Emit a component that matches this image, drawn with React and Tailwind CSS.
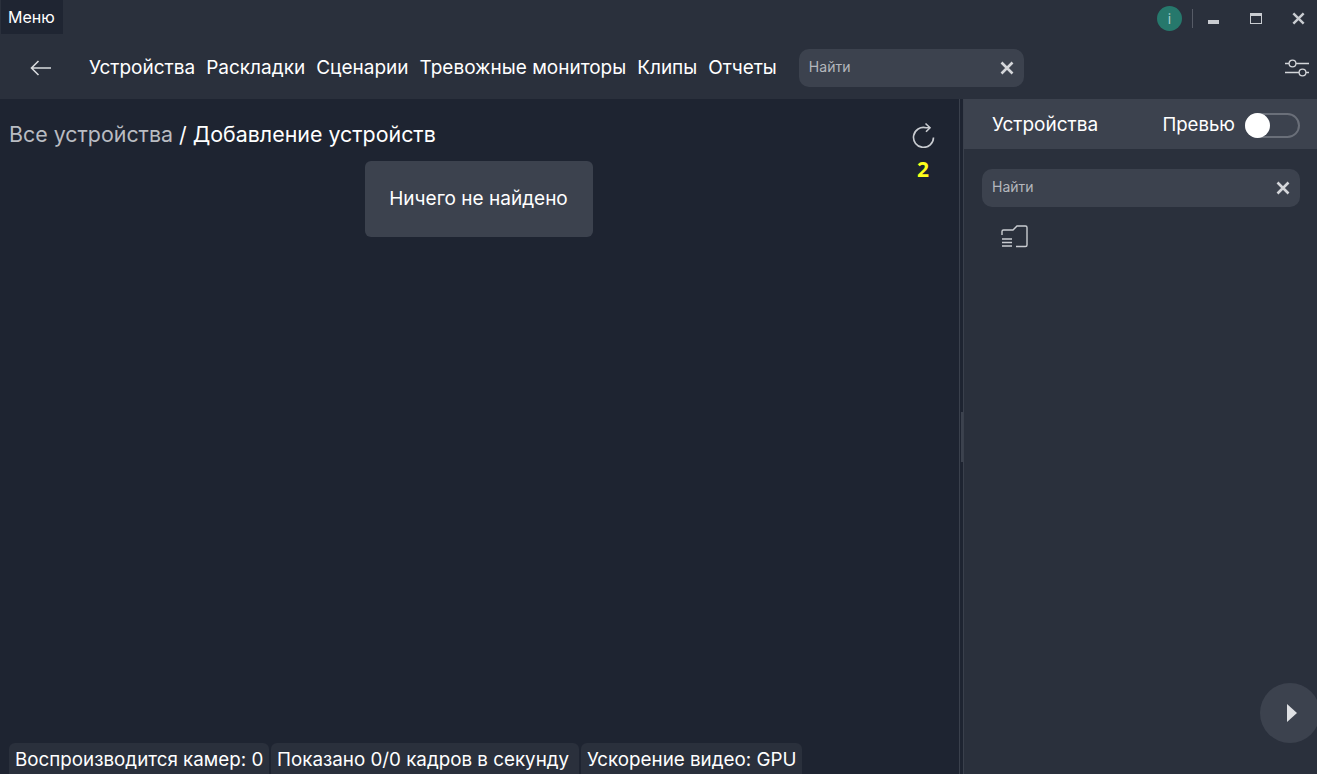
const navItems = ["Устройства", "Раскладки", "Сценарии", "Тревожные мониторы", "Клипы", "Отчеты"];
const statusItems = [
  { text: "Воспроизводится камер: 0", width: "w-[260px]" },
  { text: "Показано 0/0 кадров в секунду", width: "w-[308px]" },
  { text: "Ускорение видео: GPU", width: "w-[221px]" },
];

const CloseIcon = ({ size = 16 }) => (
  <svg width={size} height={size} viewBox="0 0 16 16" fill="none" stroke="currentColor" strokeWidth="2.6">
    <path d="M2.5 2.5l11 11M13.5 2.5l-11 11" />
  </svg>
);

const SearchBox = ({ className }) => (
  <div className={`flex items-center justify-between h-[38px] rounded-[10px] bg-[#3c424e] pl-[10px] pr-[9px] text-[#d4d6da] ${className}`}>
    <span className="pb-[4px] text-[14px] text-[#b4b7bd]">Найти</span>
    <CloseIcon />
  </div>
);

export default function App() {
  return (
    <div
      className="flex flex-col h-[774px] w-[1317px] overflow-hidden bg-[#1e2431] text-white"
      style={{ fontFamily: "Inter, 'Noto Sans', sans-serif" }}
    >
      <header className="flex flex-col h-[99px] bg-[#2a303c] shrink-0">
        <div className="flex items-start justify-between h-[35px]">
          <div className="ml-px flex items-center h-[34px] w-[62px] pl-[7px] bg-[#1f2532] text-[16px]">Меню</div>
          <div className="flex items-center h-[36px] text-[#c9ccd1]">
            <div className="flex items-center justify-center w-[25px] h-[25px] rounded-full bg-[#26786c] text-[14px] text-[#a9cfc8]">i</div>
            <div className="ml-[10px] w-px h-[19px] bg-[#565b66]" />
            <div className="ml-[15px] mt-[7px] w-[11px] h-[4px] bg-[#c9ccd1]" />
            <div className="ml-[31px] w-[12px] h-[11px] border border-[#c9ccd1] border-t-[3px]" />
            <div className="ml-[29px] mr-[11px]"><CloseIcon size={15} /></div>
          </div>
        </div>
        <div className="flex items-center h-[64px] pt-[2px]">
          <svg className="ml-[30px] text-[#d8dadd]" width="22" height="16" viewBox="0 0 22 16" fill="none" stroke="currentColor" strokeWidth="1.6">
            <path d="M21 8H1.5M8.5 1L1.5 8l7 7" />
          </svg>
          <nav className="ml-[37px] flex items-center gap-[11px] text-[19px]">
            {navItems.map((item) => (
              <span key={item} className="whitespace-nowrap">{item}</span>
            ))}
          </nav>
          <SearchBox className="ml-[22px] w-[225px]" />
          <svg className="ml-auto mr-[7px] text-[#d4d6da]" width="26" height="22" viewBox="0 0 26 22" fill="none" stroke="currentColor" strokeWidth="1.3">
            <path d="M1 6.5h4M12 6.5h13M1 15.5h14M22 15.5h3" />
            <circle cx="8.5" cy="6.5" r="3.4" />
            <circle cx="18.5" cy="15.5" r="3.4" />
          </svg>
        </div>
      </header>

      <div className="flex flex-1 min-h-0">
        <main className="flex flex-col w-[959px] shrink-0">
          <div className="flex items-start justify-between h-[62px]">
            <div className="mt-[21px] ml-[9px] text-[21.4px] leading-[28px]">
              <span className="text-[#b9bcc2]">Все устройства</span> / Добавление устройств
            </div>
            <div className="mt-[23px] mr-[24px] flex flex-col items-center">
              <svg className="translate-x-px text-[#c9ccd1]" width="24" height="26" viewBox="0 0 24 26" fill="none" stroke="currentColor" strokeWidth="1.6">
                <path d="M21.5 15.5A10 10 0 1 1 14 5.7H18" />
                <path d="M13.5 1.5L18 5.7l-4 4" />
              </svg>
              <span className="mt-[8px] text-[21px] leading-[27px] font-bold text-[#ffff1a]" style={{ fontFamily: "'Open Sans', sans-serif" }}>2</span>
            </div>
          </div>
          <div className="flex justify-center pr-[2px]">
            <div className="flex items-center justify-center w-[228px] h-[76px] rounded-[6px] bg-[#3c424e] text-[19px]">Ничего не найдено</div>
          </div>
          <div className="mt-auto flex pl-[9px] gap-[2px]">
            {statusItems.map((item) => (
              <div key={item.text} className={`flex items-center h-[31px] pt-[3px] pl-[6px] rounded-t-[6px] bg-[#2a303c] text-[18.8px] whitespace-nowrap ${item.width}`}>{item.text}</div>
            ))}
          </div>
        </main>

        <div className="flex items-center justify-center w-[5px] shrink-0 border-x border-[#3a404c]">
          <div className="w-[2px] h-[50px] bg-[#3c424e]" />
        </div>

        <aside className="relative flex-1 bg-[#2a303c]">
          <div className="flex items-center h-[50px] pt-[2px] pl-[28px] pr-[17px] bg-[#3c424e]">
            <span className="text-[19px]">Устройства</span>
            <span className="ml-auto text-[18.6px]">Превью</span>
            <div className="ml-[10px] flex items-center w-[55px] h-[25px] rounded-full border-2 border-[#6a6f79]">
              <div className="-ml-[2px] w-[25px] h-[25px] rounded-full bg-white" />
            </div>
          </div>
          <SearchBox className="mt-[20px] ml-[18px] mr-[17px]" />
          <svg className="mt-[17px] ml-[37px] text-[#c9ccd1]" width="28" height="24" viewBox="0 0 28 24" fill="none" stroke="currentColor" strokeWidth="1.4">
            <path d="M1 11V7.5Q1 6 2.5 6H12L16 2H24.5Q26 2 26 3.5V21Q26 22.5 24.5 22.5H15" />
            <path d="M1 15h10M1 18.5h10M1 22h10" />
          </svg>
          <div className="absolute bottom-[31px] right-[-3px] flex items-center justify-center w-[60px] h-[60px] pl-[4px] rounded-full bg-[#3c424e]">
            <svg width="10" height="18" viewBox="0 0 10 18" fill="#dfe1e4"><path d="M0 0l10 9-10 9z" /></svg>
          </div>
        </aside>
      </div>
    </div>
  );
}
